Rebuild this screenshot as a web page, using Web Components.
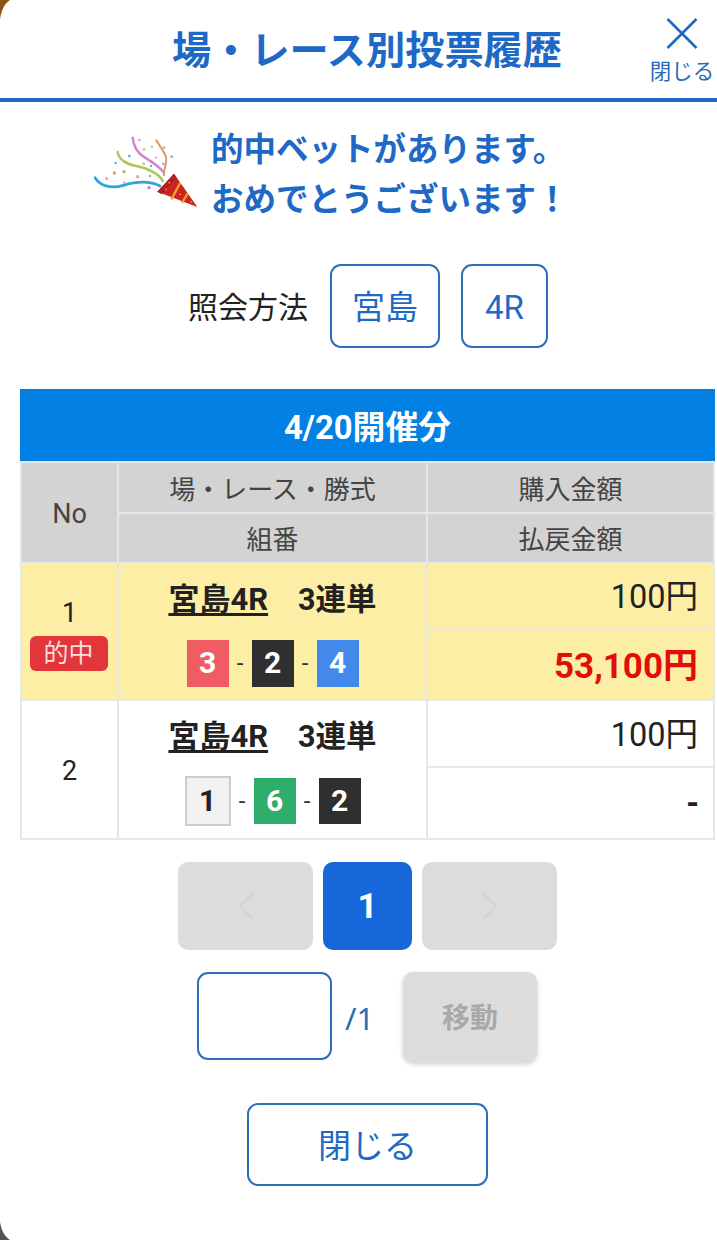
<!DOCTYPE html>
<html lang="ja"><head><meta charset="utf-8">
<style>
html,body{margin:0;padding:0;background:#fff}
body{width:717px;height:1240px;overflow:hidden;font-family:Roboto,"Noto Sans CJK JP",sans-serif}
</style></head><body>
<history-sheet>
  <sheet-header title="場・レース別投票履歴"></sheet-header>
  <win-banner></win-banner>
  <query-row venue="宮島" race="4R"></query-row>
  <result-table date="4/20開催分">
    <result-row no="1" hit="1" combo="3,2,4" buy="100円" pay="53,100円"></result-row>
    <result-row no="2" combo="1,6,2" buy="100円" pay="-"></result-row>
  </result-table>
  <page-nav></page-nav>
  <page-jump></page-jump>
  <close-button></close-button>
</history-sheet>
<script>
const el=(name,html)=>customElements.define(name,class extends HTMLElement{
  connectedCallback(){ if(this.shadowRoot)return; this.attachShadow({mode:'open'}).innerHTML=html(this); }
});
el('history-sheet',()=>`<style>
:host{display:block;position:relative;width:717px;height:1240px;background:#fff;overflow:hidden;color:#222}
.c{position:absolute;width:24px;height:24px}
</style>
<svg class="c" style="left:0;top:0" viewBox="0 0 24 24"><path d="M0 0H10C4 4 1 11 0 20Z" fill="#8a5313"/></svg>
<svg class="c" style="left:0;bottom:0" viewBox="0 0 24 24"><path d="M0 6C1 13 4 20 10 24H0Z" fill="#555"/></svg>
<slot></slot>`);
el('sheet-header',h=>`<style>
:host{display:block;height:102px;box-sizing:border-box;border-bottom:4px solid #2268bf;position:relative}
h1{margin:0;padding:27px 0 0 17px;text-align:center;font:700 39.200px/48px Roboto,"Noto Sans CJK JP",sans-serif;color:#1e69c6}
button{position:absolute;right:0;top:17px;width:70px;background:none;border:0;padding:0;color:#2a6db8;font:400 21.500px/26px Roboto,"Noto Sans CJK JP",sans-serif;white-space:nowrap;display:flex;flex-direction:column;align-items:center}
svg{display:block;width:34px;height:34px;margin-bottom:8px}
</style><h1>${h.getAttribute('title')}</h1>
<button><svg viewBox="0 0 34 34"><path d="M2.500 2 31.500 31M31.500 2 2.500 31" stroke="#1e69c6" stroke-width="2.600" fill="none"/></svg>閉じる</button>`);
el('win-banner',()=>`<style>
:host{display:flex;align-items:center;gap:13px;height:100px;margin-top:21px;padding-left:94px;color:#1e69c6;font:700 32.500px/50px Roboto,"Noto Sans CJK JP",sans-serif}
svg{width:104px;height:75px;flex:none}
p{margin:0;padding-top:3px}
</style>
<svg viewBox="42 30 312 225" fill="none" stroke-linecap="round">
<path d="M45 155C60 178 90 190 130 178S205 162 240 180" stroke="#2ea6d8" stroke-width="8.500"/>
<path d="M113 78C115 100 140 115 170 120S240 145 248 165" stroke="#a9c85c" stroke-width="7.500"/>
<path d="M158 35C160 60 170 80 195 95S240 125 250 138" stroke="#cf86cf" stroke-width="7.500"/>
<path d="M229 43C240 60 250 75 257 90S250 130 252 148" stroke="#e09a62" stroke-width="6"/>
<path d="M232 197 282 143 352 243Z" fill="#c8261f"/>
<path d="M232 197 282 143 290 155 245 205Z" fill="#b01f22"/>
<path d="M301 170 274 220M323 202 306 231" stroke="#f0a02c" stroke-width="7" stroke-linecap="butt"/>
<g stroke="none">
<circle cx="178" cy="42" r="4" fill="#d9a79f"/><circle cx="192" cy="70" r="4" fill="#b9c96f"/><circle cx="216" cy="62" r="3.500" fill="#b9c96f"/><circle cx="252" cy="65" r="4" fill="#d9a0b0"/>
<circle cx="148" cy="90" r="4" fill="#5aa8d8"/><circle cx="107" cy="111" r="4" fill="#6fb4e0"/><circle cx="228" cy="95" r="3.500" fill="#d8a8c8"/><circle cx="275" cy="92" r="4" fill="#6fb4e0"/>
<circle cx="191" cy="113" r="4" fill="#d9b090"/><circle cx="213" cy="120" r="3.500" fill="#5fb0d8"/><circle cx="250" cy="114" r="3.500" fill="#5fb0d8"/><circle cx="103" cy="141" r="5" fill="#e39a70"/>
<circle cx="132" cy="137" r="5" fill="#a9c060"/><circle cx="80" cy="158" r="4" fill="#e090b0"/><circle cx="173" cy="152" r="5" fill="#e0a0b0"/><circle cx="210" cy="150" r="4" fill="#d9a090"/>
<circle cx="133" cy="170" r="4" fill="#e8a0b8"/><circle cx="207" cy="185" r="5" fill="#c080c0"/>
<circle cx="258" cy="190" r="2.500" fill="#f3b04a"/><circle cx="268" cy="170" r="2.500" fill="#f3b04a"/><circle cx="300" cy="205" r="2.500" fill="#f3b04a"/><circle cx="333" cy="228" r="2.500" fill="#f3b04a"/>
</g></svg><p>的中ベットがあります。<br>おめでとうございます！</p>`);
el('query-row',h=>`<style>
:host{display:flex;align-items:center;gap:21px;margin-top:41px;height:84px;padding-left:188px;font:400 30px/1 Roboto,"Noto Sans CJK JP",sans-serif;color:#222}
span{width:121px;padding-top:4px}
b{box-sizing:border-box;height:84px;padding-top:2px;display:flex;align-items:center;justify-content:center;border:2px solid #2b70b9;border-radius:11px;color:#1e69c6;font-weight:400;font-size:33px}
.v{width:110px}.r{width:87px}
</style><span>照会方法</span><b class="v">${h.getAttribute('venue')}</b><b class="r">${h.getAttribute('race')}</b>`);
el('result-table',h=>`<style>
:host{display:block;width:695px;margin:41px 0 0 20px;box-sizing:border-box;font:400 26px/1 Roboto,"Noto Sans CJK JP",sans-serif}
.d{height:72px;background:#0380e4;color:#fff;font:700 32.800px/78px Roboto,"Noto Sans CJK JP",sans-serif;text-align:center}
.g{display:grid;grid-template-columns:95px 307px 1fr;grid-template-rows:49px 48px;gap:2px;background:#e7e7e7;border:solid #e7e7e7;border-width:2px 2px 1px 2px;color:#444}
.g div{background:#d3d3d3;display:flex;align-items:center;justify-content:center;padding-top:4px;box-sizing:border-box}
.n{grid-row:span 2;font-size:27px}
</style><div class="d">${h.getAttribute('date')}</div>
<div class="g"><div class="n">No</div><div>場・レース・勝式</div><div>購入金額</div><div>組番</div><div>払戻金額</div></div>
<slot></slot>`);
const colors={1:['#f1f1f1','#222','2px solid #ccc'],2:['#2f2f2f','#fff','0'],3:['#ef5c64','#fff','0'],4:['#4389ec','#fff','0'],6:['#2fae6b','#fff','0']};
el('result-row',h=>{
const hit=h.hasAttribute('hit');
const combo=h.getAttribute('combo').split(',').map(n=>{const c=colors[n];
  return `<i style="background:${c[0]};color:${c[1]};border:${c[2]};${n=='1'?'width:46px;height:50px;':''}">${n}</i>`}).join('<u>-</u>');
const bg=hit?'#fdeea6':'#fff';const pay=h.getAttribute('pay');
return `<style>
:host{display:grid;grid-template-columns:95px 307px 1fr;grid-template-rows:65px 1fr;gap:2px;width:695px;box-sizing:border-box;height:${hit?138:139}px;background:#e7e7e7;border:solid #e7e7e7;border-width:0 2px 2px 2px;color:#222;font:400 32.500px/1 Roboto,"Noto Sans CJK JP",sans-serif}
div{background:${bg};display:flex;align-items:center;justify-content:center}
.no{grid-row:span 2;flex-direction:column;font-size:27px;padding-top:${hit?8:4}px;box-sizing:border-box}
.tag{display:block;margin:9px 2px 0 0;width:78px;height:35px;border-radius:6px;background:#e2363a;color:#fbdcdc;font:400 25px/35px Roboto,"Noto Sans CJK JP",sans-serif;text-align:center}
.m{grid-row:span 2;flex-direction:column;justify-content:flex-start;padding-top:${hit?19:18}px;box-sizing:border-box;font-weight:700;font-size:31px;color:#222}
.t{display:flex;gap:30px;line-height:36px}.t a{text-decoration:underline;text-underline-offset:3px;color:inherit}
.t span{font-size:30.500px}
.c{display:flex;align-items:center;margin-top:${hit?20:21}px;height:50px}
i{font-style:normal;box-sizing:border-box;width:42px;height:${hit?47:46}px;display:flex;align-items:center;justify-content:center;font:700 30px/1 Roboto,sans-serif}
u{text-decoration:none;font:400 24px/1 Roboto,sans-serif;width:23px;text-align:center;color:#333}
.a{justify-content:flex-end;padding:3px 15px 0 0;box-sizing:border-box}
.p{font-weight:700;${pay=='-'?'padding:0 14px 0 0;':'color:#e00f0a;font-size:35px;'}}
</style><div class="no">${h.getAttribute('no')}${hit?'<span class="tag">的中</span>':''}</div>
<div class="m"><span class="t"><a>宮島4R</a><span>3連単</span></span><span class="c">${combo}</span></div>
<div class="a">${h.getAttribute('buy')}</div><div class="a p">${pay}</div>`});
el('page-nav',()=>`<style>
:host{display:flex;gap:10px;margin-top:22px;height:88px;padding-left:178px}
div{border-radius:10px;display:flex;align-items:center;justify-content:center;background:#dcdcdc}
.w{width:135px}.o{width:89px;background:#1767db;color:#fff;font:700 35px/1 Roboto,sans-serif}
svg{width:18px;height:30px}
</style><div class="w"><svg viewBox="0 0 18 30"><path d="M16 2 3 15 16 28" fill="none" stroke="#d0d0d0" stroke-width="1.500"/></svg></div><div class="o">1</div><div class="w"><svg viewBox="0 0 18 30"><path d="M2 2 15 15 2 28" fill="none" stroke="#d0d0d0" stroke-width="1.500"/></svg></div>`);
el('page-jump',()=>`<style>
:host{display:flex;align-items:flex-start;margin:22px 0 0 197px;height:90px}
.i{box-sizing:border-box;width:135px;height:88px;border:2px solid #2b70b9;border-radius:11px;background:#fff}
.s{width:71px;padding:26px 0 0 13px;box-sizing:border-box;color:#2a6db8;font:400 31px/1.300 "Noto Sans",sans-serif}
.b{width:134px;height:90px;border-radius:10px;background:#dcdcdc;box-shadow:0 2px 5px rgba(0,0,0,.2);color:#a9a9a9;font:700 28px/94px Roboto,"Noto Sans CJK JP",sans-serif;text-align:center}
</style><div class="i"></div><div class="s">/1</div><div class="b">移動</div>`);
el('close-button',()=>`<style>
:host{display:flex;box-sizing:border-box;width:241px;height:83px;margin:41px 0 0 247px;padding-top:3px;border:2px solid #2b70b9;border-radius:11px;align-items:center;justify-content:center;color:#1e69c6;font:400 33px/1 Roboto,"Noto Sans CJK JP",sans-serif}
</style>閉じる`);
</script>
</body></html>
